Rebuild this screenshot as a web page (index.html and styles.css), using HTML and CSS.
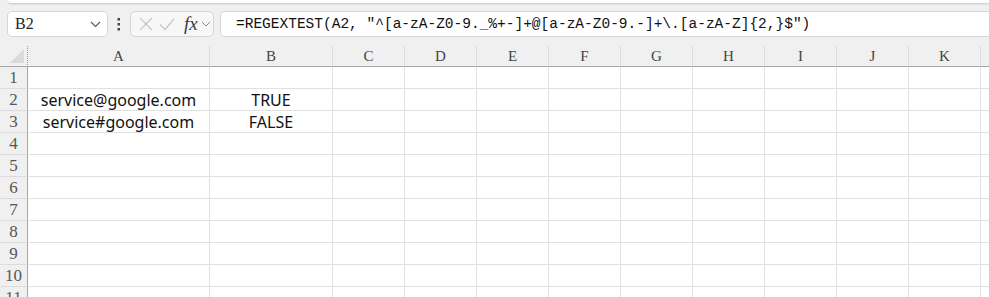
FILE: index.html
```html
<!DOCTYPE html>
<html lang="zh-Hant">
<head>
  <meta charset="UTF-8">
  <title>REGEXTEST</title>
  <link rel="stylesheet" href="styles.css">
</head>
<body>
  <div class="ribbon-edge"></div>

  <div class="formula-bar">
    <div class="name-box">
      <span class="name-text">B2</span>
      <svg class="chev" width="11" height="7" viewBox="0 0 11 7"><polyline points="1,1 5.5,5.5 10,1" fill="none" stroke="#555" stroke-width="1.1"/></svg>
    </div>
    <div class="dots">
      <svg width="4" height="13" viewBox="0 0 4 13"><rect x="0.5" y="0" width="2.5" height="2.5" fill="#444"/><rect x="0.5" y="5" width="2.5" height="2.5" fill="#444"/><rect x="0.5" y="10" width="2.5" height="2.5" fill="#444"/></svg>
    </div>
    <div class="fx-box">
      <svg width="14" height="14" viewBox="0 0 14 14"><path d="M1 1 L13 13 M13 1 L1 13" stroke="#c6c6c6" stroke-width="1.2" fill="none"/></svg>
      <svg width="16" height="13" viewBox="0 0 16 13"><polyline points="1,6.5 6,11.5 15,1" fill="none" stroke="#c6c6c6" stroke-width="1.2"/></svg>
      <span class="fx">fx</span>
      <svg width="10" height="6" viewBox="0 0 10 6"><polyline points="1,1 5,5 9,1" fill="none" stroke="#888" stroke-width="1"/></svg>
    </div>
    <div class="formula-input">=REGEXTEST(A2, "^[a-zA-Z0-9._%+-]+@[a-zA-Z0-9.-]+\.[a-zA-Z]{2,}$")</div>
  </div>

  <div class="sheet">
    <div class="corner"><div class="tri"></div></div>
    <div class="col-head">A</div>
    <div class="col-head">B</div>
    <div class="col-head">C</div>
    <div class="col-head">D</div>
    <div class="col-head">E</div>
    <div class="col-head">F</div>
    <div class="col-head">G</div>
    <div class="col-head">H</div>
    <div class="col-head">I</div>
    <div class="col-head">J</div>
    <div class="col-head">K</div>
    <div class="col-head"></div>
  </div>

  <script>
    const data = {
      2: ['service@google.com', 'TRUE'],
      3: ['service#google.com', 'FALSE']
    };
    const sheet = document.querySelector('.sheet');
    for (let r = 1; r <= 11; r++) {
      const head = document.createElement('div');
      head.className = 'row-head';
      head.textContent = r;
      sheet.appendChild(head);
      for (let c = 0; c < 12; c++) {
        const cell = document.createElement('div');
        cell.className = 'cell';
        if (data[r] && data[r][c]) cell.textContent = data[r][c];
        sheet.appendChild(cell);
      }
    }
  </script>
</body>
</html>
```

FILE: styles.css
```css
body {
  margin: 0;
  background-color: #f0f0f0;
  font-family: "Noto Sans", Arial, sans-serif;
  overflow: hidden;
}
.ribbon-edge {
  height: 3px;
  margin-left: 8px;
  background: white;
  border-bottom-left-radius: 6px;
  box-shadow: 0 1px 2px rgba(0,0,0,0.18);
}
.formula-bar {
  display: flex;
  align-items: center;
  height: 26px;
  margin-top: 8px;
  padding-left: 7px;
}
.name-box {
  box-sizing: border-box;
  width: 101px;
  height: 26px;
  display: flex;
  align-items: center;
  justify-content: space-between;
  padding: 0 6px 0 7px;
  background: white;
  border: 1px solid #d6d6d6;
  border-radius: 5px;
}
.name-text {
  font-family: "Liberation Serif", serif;
  font-size: 16px;
  color: #222;
}
.dots {
  width: 21px;
  display: flex;
  justify-content: center;
  padding-right: 1px;
}
.fx-box {
  box-sizing: border-box;
  width: 84px;
  height: 26px;
  display: flex;
  align-items: center;
  gap: 6px;
  padding-left: 8px;
  background: #f7f7f7;
  border: 1px solid #d6d6d6;
  border-radius: 5px;
}
.fx {
  font-family: "Liberation Serif", serif;
  font-style: italic;
  font-size: 19px;
  color: #3a3a3a;
  margin-left: 3px;
  margin-right: -3px;
}
.formula-input {
  box-sizing: border-box;
  flex: 1;
  height: 26px;
  margin-left: 6px;
  padding-left: 15px;
  line-height: 24px;
  background: white;
  border: 1px solid #d6d6d6;
  border-right: none;
  border-radius: 5px 0 0 5px;
  font-family: "Liberation Mono", monospace;
  font-size: 14.5px;
  color: #111;
  white-space: nowrap;
}
.sheet {
  display: grid;
  grid-template-columns: 28px 182px 123px repeat(10, 72px);
  grid-auto-rows: 22px;
  grid-template-rows: 21px;
  margin-top: 9px;
}
.corner, .col-head, .row-head {
  box-sizing: border-box;
  background: #f0f0f0;
  color: #444;
  font-family: "Liberation Serif", serif;
  font-size: 15px;
}
.corner {
  position: relative;
  border-right: 1px dotted #9a9a9a;
  border-bottom: 1px solid #a6a6a6;
}
.tri {
  position: absolute;
  right: 3px;
  bottom: 3px;
  width: 0;
  height: 0;
  border-left: 14px solid transparent;
  border-bottom: 14px solid #dadada;
}
.col-head {
  display: flex;
  align-items: flex-end;
  justify-content: center;
  padding-bottom: 1px;
  border-right: 1px solid #dcdcdc;
  border-bottom: 1px solid #a6a6a6;
}
.row-head {
  display: flex;
  align-items: center;
  justify-content: center;
  border-right: 1px solid #a6a6a6;
  border-bottom: 1px solid #dcdcdc;
  font-size: 17px;
  color: #555;
}
.cell {
  box-sizing: border-box;
  display: flex;
  align-items: center;
  justify-content: center;
  background: white;
  border-right: 1px solid #e0e0e0;
  border-bottom: 1px solid #e0e0e0;
  font-size: 16px;
  color: #111;
  white-space: nowrap;
}
```
